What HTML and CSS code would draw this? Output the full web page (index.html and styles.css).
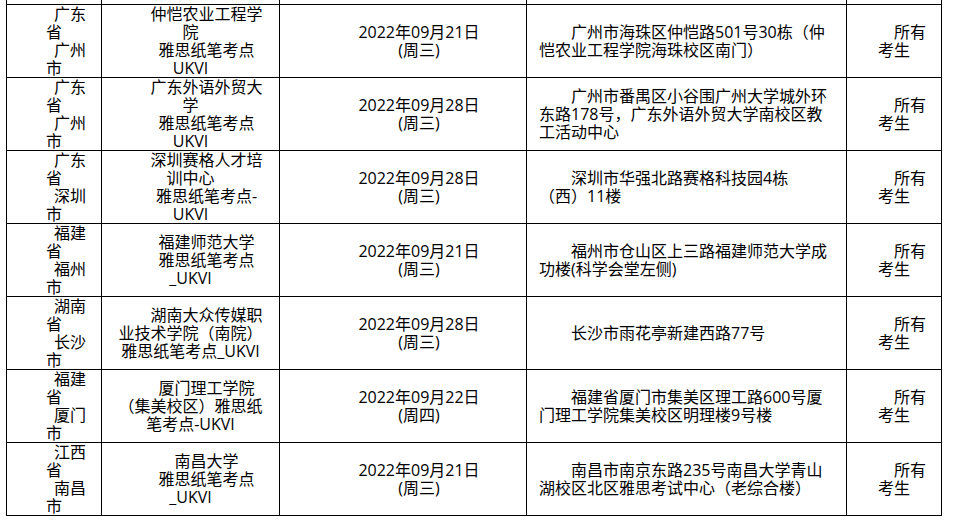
FILE: index.html
```html
<!DOCTYPE html>
<html lang="zh-CN">
<head>
<meta charset="utf-8">
<title>雅思纸笔考点</title>
<link rel="stylesheet" href="styles.css">
</head>
<body>
<table class="venues">
  <colgroup>
    <col class="c-region">
    <col class="c-venue">
    <col class="c-date">
    <col class="c-addr">
    <col class="c-who">
  </colgroup>
  <tbody>
    <tr class="cut"><td></td><td></td><td></td><td></td><td></td></tr>
    <tr>
      <td class="region"><p>广东省</p><p>广州市</p></td>
      <td class="venue"><p>仲恺农业工程学院</p><p>雅思纸笔考点UKVI</p></td>
      <td class="date"><p>2022年09月21日</p><p>(周三)</p></td>
      <td class="addr"><p>广州市海珠区仲恺路501号30栋（仲<br>恺农业工程学院海珠校区南门）</p></td>
      <td class="who"><p>所有考生</p></td>
    </tr>
    <tr>
      <td class="region"><p>广东省</p><p>广州市</p></td>
      <td class="venue"><p>广东外语外贸大学</p><p>雅思纸笔考点UKVI</p></td>
      <td class="date"><p>2022年09月28日</p><p>(周三)</p></td>
      <td class="addr"><p>广州市番禺区小谷围广州大学城外环<br>东路178号，广东外语外贸大学南校区教<br>工活动中心</p></td>
      <td class="who"><p>所有考生</p></td>
    </tr>
    <tr>
      <td class="region"><p>广东省</p><p>深圳市</p></td>
      <td class="venue"><p>深圳赛格人才培训中心</p><p>雅思纸笔考点-UKVI</p></td>
      <td class="date"><p>2022年09月28日</p><p>(周三)</p></td>
      <td class="addr"><p>深圳市华强北路赛格科技园4栋<br>（西）11楼</p></td>
      <td class="who"><p>所有考生</p></td>
    </tr>
    <tr>
      <td class="region"><p>福建省</p><p>福州市</p></td>
      <td class="venue"><p>福建师范大学</p><p>雅思纸笔考点_UKVI</p></td>
      <td class="date"><p>2022年09月21日</p><p>(周三)</p></td>
      <td class="addr"><p>福州市仓山区上三路福建师范大学成<br>功楼(科学会堂左侧)</p></td>
      <td class="who"><p>所有考生</p></td>
    </tr>
    <tr>
      <td class="region"><p>湖南省</p><p>长沙市</p></td>
      <td class="venue"><p>湖南大众传媒职业技术学院（南院）雅思纸笔考点_UKVI</p></td>
      <td class="date"><p>2022年09月28日</p><p>(周三)</p></td>
      <td class="addr"><p>长沙市雨花亭新建西路77号</p></td>
      <td class="who"><p>所有考生</p></td>
    </tr>
    <tr>
      <td class="region"><p>福建省</p><p>厦门市</p></td>
      <td class="venue"><p>厦门理工学院（集美校区）雅思纸笔考点-UKVI</p></td>
      <td class="date"><p>2022年09月22日</p><p>(周四)</p></td>
      <td class="addr"><p>福建省厦门市集美区理工路600号厦<br>门理工学院集美校区明理楼9号楼</p></td>
      <td class="who"><p>所有考生</p></td>
    </tr>
    <tr>
      <td class="region"><p>江西省</p><p>南昌市</p></td>
      <td class="venue"><p>南昌大学</p><p>雅思纸笔考点_UKVI</p></td>
      <td class="date"><p>2022年09月21日</p><p>(周三)</p></td>
      <td class="addr"><p>南昌市南京东路235号南昌大学青山<br>湖校区北区雅思考试中心（老综合楼）</p></td>
      <td class="who"><p>所有考生</p></td>
    </tr>
  </tbody>
</table>
</body>
</html>
```
FILE: styles.css
```css
html, body {
  margin: 0;
  padding: 0;
  background: #ffffff;
}

body {
  font-family: "Open Sans", "Noto Sans CJK SC", sans-serif;
  font-size: 16px;
  line-height: 18px;
  color: #000000;
}

.venues {
  margin-left: 6px;
  width: 935px;
  table-layout: fixed;
  border-collapse: collapse;
}

.c-region { width: 95px; }
.c-venue { width: 178px; }
.c-date { width: 247px; }
.c-addr { width: 320px; }
.c-who { width: 95px; }

.venues td {
  border: 1px solid #000000;
  vertical-align: middle;
  text-align: center;
  padding: 0 12px;
}

.venues p {
  margin: 0;
  text-indent: 2em;
}

.venues .cut td {
  border-top: none;
  height: 4px;
  padding: 0;
}

.venues td.region,
.venues td.who {
  padding: 0 10px;
}

.venues td.addr {
  text-align: left;
  padding: 0 8px 0 12px;
}
```
